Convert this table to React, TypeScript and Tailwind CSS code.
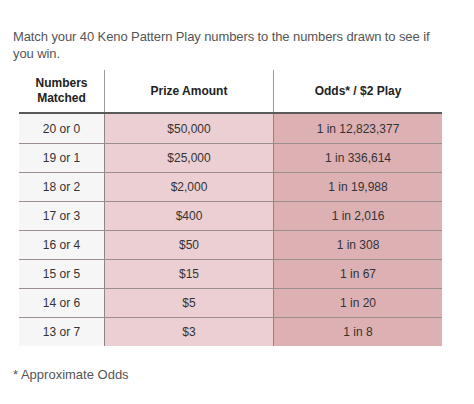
const rows = [
  ["20 or 0", "$50,000", "1 in 12,823,377"],
  ["19 or 1", "$25,000", "1 in 336,614"],
  ["18 or 2", "$2,000", "1 in 19,988"],
  ["17 or 3", "$400", "1 in 2,016"],
  ["16 or 4", "$50", "1 in 308"],
  ["15 or 5", "$15", "1 in 67"],
  ["14 or 6", "$5", "1 in 20"],
  ["13 or 7", "$3", "1 in 8"],
];

export default function App() {
  return (
    <div className="h-[404px] w-[474px] bg-white pl-[13px] pt-[28px] font-['Liberation_Sans',Arial,sans-serif]">
      <p className="w-[440px] text-[13px] leading-[17px] tracking-[-0.1px] text-[#555]">
        Match your 40 Keno Pattern Play numbers to the numbers drawn to see if you win.
      </p>

      <div className="ml-[6px] mt-[8px] w-[423px]">
        {/* header */}
        <div className="grid h-[44px] grid-cols-[85px_169px_169px] border-b-2 border-[#5a5a5a] text-[12px] font-bold leading-[15px] text-[#222]">
          <div className="flex items-center justify-center text-center">
            Numbers
            <br />
            Matched
          </div>
          <div className="flex items-center justify-center border-l border-[#9a9a9a]">Prize Amount</div>
          <div className="flex items-center justify-center border-l border-[#9a9a9a]">Odds* / $2 Play</div>
        </div>

        {/* body */}
        {rows.map((r, i) => (
          <div
            key={r[0]}
            className={`grid h-[29px] grid-cols-[85px_169px_169px] text-[12px] text-[#333] ${i > 0 ? "border-t border-[#9b8e8f]" : ""}`}
          >
            <div className="flex items-center justify-center bg-[#f6f6f6]">{r[0]}</div>
            <div className="flex items-center justify-center border-l border-[#8f8586] bg-[#ebcfd2]">{r[1]}</div>
            <div className="flex items-center justify-center border-l border-[#8f8586] bg-[#ddb0b3]">{r[2]}</div>
          </div>
        ))}
      </div>

      <p className="mt-[20px] text-[13px] leading-[17px] text-[#555]">* Approximate Odds</p>
    </div>
  );
}
